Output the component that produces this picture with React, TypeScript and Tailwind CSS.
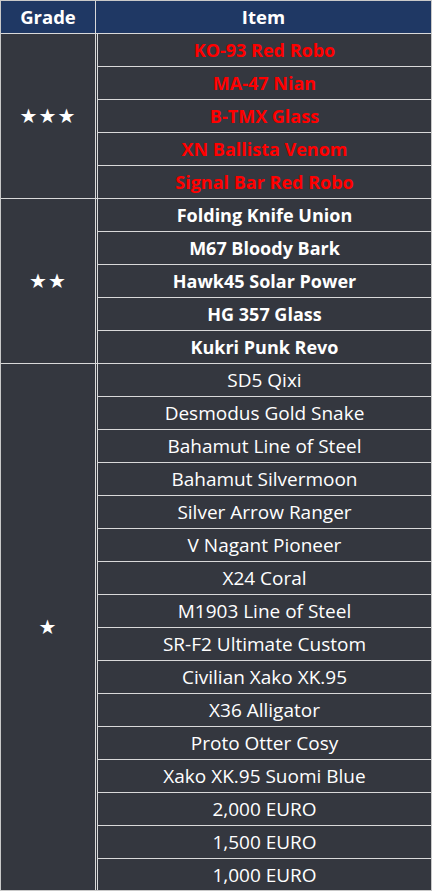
import * as React from 'react';

type Item = { name: string; tone: 'red' | 'bold' | 'plain' };

const groups: { stars: string; items: Item[] }[] = [
  {
    stars: '★★★',
    items: [
      'KO-93 Red Robo',
      'MA-47 Nian',
      'B-TMX Glass',
      'XN Ballista Venom',
      'Signal Bar Red Robo',
    ].map((name) => ({ name, tone: 'red' as const })),
  },
  {
    stars: '★★',
    items: [
      'Folding Knife Union',
      'M67 Bloody Bark',
      'Hawk45 Solar Power',
      'HG 357 Glass',
      'Kukri Punk Revo',
    ].map((name) => ({ name, tone: 'bold' as const })),
  },
  {
    stars: '★',
    items: [
      'SD5 Qixi',
      'Desmodus Gold Snake',
      'Bahamut Line of Steel',
      'Bahamut Silvermoon',
      'Silver Arrow Ranger',
      'V Nagant Pioneer',
      'X24 Coral',
      'M1903 Line of Steel',
      'SR-F2 Ultimate Custom',
      'Civilian Xako XK.95',
      'X36 Alligator',
      'Proto Otter Cosy',
      'Xako XK.95 Suomi Blue',
      '2,000 EURO',
      '1,500 EURO',
      '1,000 EURO',
    ].map((name) => ({ name, tone: 'plain' as const })),
  },
];

const toneClass = {
  red: 'font-bold text-[18px] text-[#ff0000]',
  bold: 'font-bold text-[18px] text-white',
  plain: 'font-normal text-[19px] text-white',
};

const App: React.FC = () => {
  return (
    <div className="w-[433px] h-[892px] bg-white font-['Open_Sans',sans-serif]">
      <div className="w-[432px] h-[891px] border border-[#c9c9c9] bg-[#34373f] overflow-hidden flex flex-col">
        {/* Header */}
        <div className="flex h-[33px] shrink-0 bg-[#1f3864] border-b border-[#d9d9d9] text-white font-bold text-[18.5px]">
          <div className="w-[95px] border-r border-[#d9d9d9] flex items-center justify-center">Grade</div>
          <div className="flex-1 flex items-center justify-center">Item</div>
        </div>

        {/* Body */}
        {groups.map((group, gi) => {
          const last = gi === groups.length - 1;
          return (
            <div
              key={gi}
              className={`flex ${last ? 'flex-1 min-h-0' : 'shrink-0 border-b border-[#d9d9d9]'}`}
            >
              <div className="w-[95px] shrink-0 border-r border-[#d9d9d9] flex items-center justify-center text-white text-[20px] font-['DejaVu_Sans',sans-serif] tracking-[1px]">
                {group.stars}
              </div>
              <div className="ml-px flex-1 border-l border-[#d9d9d9] flex flex-col">
                {group.items.map((item, ii) => {
                  const lastRow = ii === group.items.length - 1;
                  return (
                    <div
                      key={item.name}
                      className={`shrink-0 flex items-center justify-center ${toneClass[item.tone]} ${
                        lastRow ? 'h-8' : 'h-[33px] border-b border-[#d9d9d9]'
                      }`}
                    >
                      {item.name}
                    </div>
                  );
                })}
              </div>
            </div>
          );
        })}
      </div>
    </div>
  );
};

export default App;
